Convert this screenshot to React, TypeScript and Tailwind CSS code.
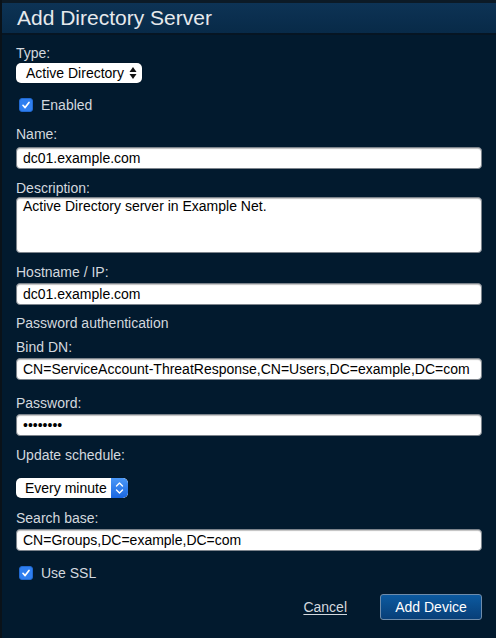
import React from "react";

const font = { fontFamily: '"Liberation Sans", Arial, sans-serif' };

function Label({ children, className = "" }: { children: React.ReactNode; className?: string }) {
  return <div className={`text-[14px] leading-[16px] text-[#d3d8de] ${className}`}>{children}</div>;
}

function TextField({ value, className = "" }: { value: string; className?: string }) {
  return (
    <input
      readOnly
      value={value}
      className={`block w-[466px] h-[22px] rounded-[4px] border border-[#7d848c] bg-white pl-[6px] pr-[4px] text-[14px] leading-[16px] text-black outline-none shadow-[inset_0_1px_1px_rgba(0,0,0,0.25)] ${className}`}
      style={font}
    />
  );
}

function Check({ label, className = "" }: { label: string; className?: string }) {
  return (
    <div className={`flex items-center h-[16px] ${className}`}>
      <div className="ml-[3px] w-[14px] h-[14px] rounded-[3px] bg-[#2f7ff0] border border-[#2169d0] flex items-center justify-center">
        <svg width="10" height="10" viewBox="0 0 10 10">
          <path d="M2 5.3 L4.1 7.6 L8 2.4" stroke="white" strokeWidth="1.7" fill="none" strokeLinecap="round" strokeLinejoin="round" />
        </svg>
      </div>
      <span className="ml-[8px] text-[14px] leading-[16px] text-[#d3d8de]">{label}</span>
    </div>
  );
}

export default function App() {
  return (
    <div className="w-[496px] min-h-[638px] bg-[#021a2e] border-l-2 border-[#0a1219]" style={font}>
      <div className="border-t-[3px] border-[#0c1a26]">
        <div className="h-[30px] bg-gradient-to-b from-[#0d3355] to-[#082a48] pl-[15px] text-[21px] leading-[30px] text-[#e6e9ec]">
          Add Directory Server
        </div>
        <div className="h-[2px] bg-[#061523]" />
      </div>
      <div className="pl-[14px] flex flex-col">
        <Label className="mt-[10px]">Type:</Label>
        <div className="mt-[2px] w-[126px] h-[20px] rounded-[5px] bg-white flex items-center justify-between pl-[10px] pr-[5px] shadow-[0_0_1px_rgba(0,0,0,0.5)]">
          <span className="text-[14px] leading-[16px] text-black">Active Directory</span>
          <svg width="8" height="14" viewBox="0 0 8 14">
            <path d="M4 1 L7.5 6 L0.5 6 Z" fill="#111" />
            <path d="M4 13 L7.5 8 L0.5 8 Z" fill="#111" />
          </svg>
        </div>
        <Check label="Enabled" className="mt-[14px]" />
        <Label className="mt-[13px]">Name:</Label>
        <TextField value="dc01.example.com" className="mt-[5px]" />
        <Label className="mt-[11px]">Description:</Label>
        <textarea
          readOnly
          value="Active Directory server in Example Net."
          className="block mt-[1px] w-[466px] h-[56px] rounded-[4px] border border-[#7d848c] bg-white pl-[6px] pr-[4px] py-0 text-[14px] leading-[16px] text-black outline-none resize-none shadow-[inset_0_1px_1px_rgba(0,0,0,0.25)]"
          style={font}
        />
        <Label className="mt-[11px]">Hostname / IP:</Label>
        <TextField value="dc01.example.com" className="mt-[3px]" />
        <Label className="mt-[10px]">Password authentication</Label>
        <Label className="mt-[8px]">Bind DN:</Label>
        <TextField value="CN=ServiceAccount-ThreatResponse,CN=Users,DC=example,DC=com" className="mt-[3px]" />
        <Label className="mt-[15px]">Password:</Label>
        <TextField value="••••••••" className="mt-[3px]" />
        <Label className="mt-[11px]">Update schedule:</Label>
        <div className="mt-[15px] w-[112px] h-[20px] rounded-[5px] bg-white flex items-center justify-between pl-[9px] shadow-[0_0_1px_rgba(0,0,0,0.5)] overflow-hidden">
          <span className="text-[14px] leading-[16px] text-black">Every minute</span>
          <div className="w-[17px] h-[20px] bg-gradient-to-b from-[#4b98f7] to-[#1a66e0] flex items-center justify-center rounded-r-[5px]">
            <svg width="9" height="14" viewBox="0 0 9 14">
              <path d="M1.5 5 L4.5 2 L7.5 5" stroke="white" strokeWidth="1.4" fill="none" strokeLinecap="round" strokeLinejoin="round" />
              <path d="M1.5 9 L4.5 12 L7.5 9" stroke="white" strokeWidth="1.4" fill="none" strokeLinecap="round" strokeLinejoin="round" />
            </svg>
          </div>
        </div>
        <Label className="mt-[12px]">Search base:</Label>
        <TextField value="CN=Groups,DC=example,DC=com" className="mt-[3px]" />
        <Check label="Use SSL" className="mt-[14px]" />
        <div className="mt-[13px] w-[466px] flex items-center justify-end">
          <span className="text-[14px] leading-[16px] text-[#d3d8de] underline underline-offset-[2px]">Cancel</span>
          <div className="ml-[33px] w-[102px] h-[26px] rounded-[3px] border border-[#6e8cab] bg-gradient-to-b from-[#0c5aa0] to-[#083f78] flex items-center justify-center text-[14px] text-white">
            Add Device
          </div>
        </div>
      </div>
    </div>
  );
}
